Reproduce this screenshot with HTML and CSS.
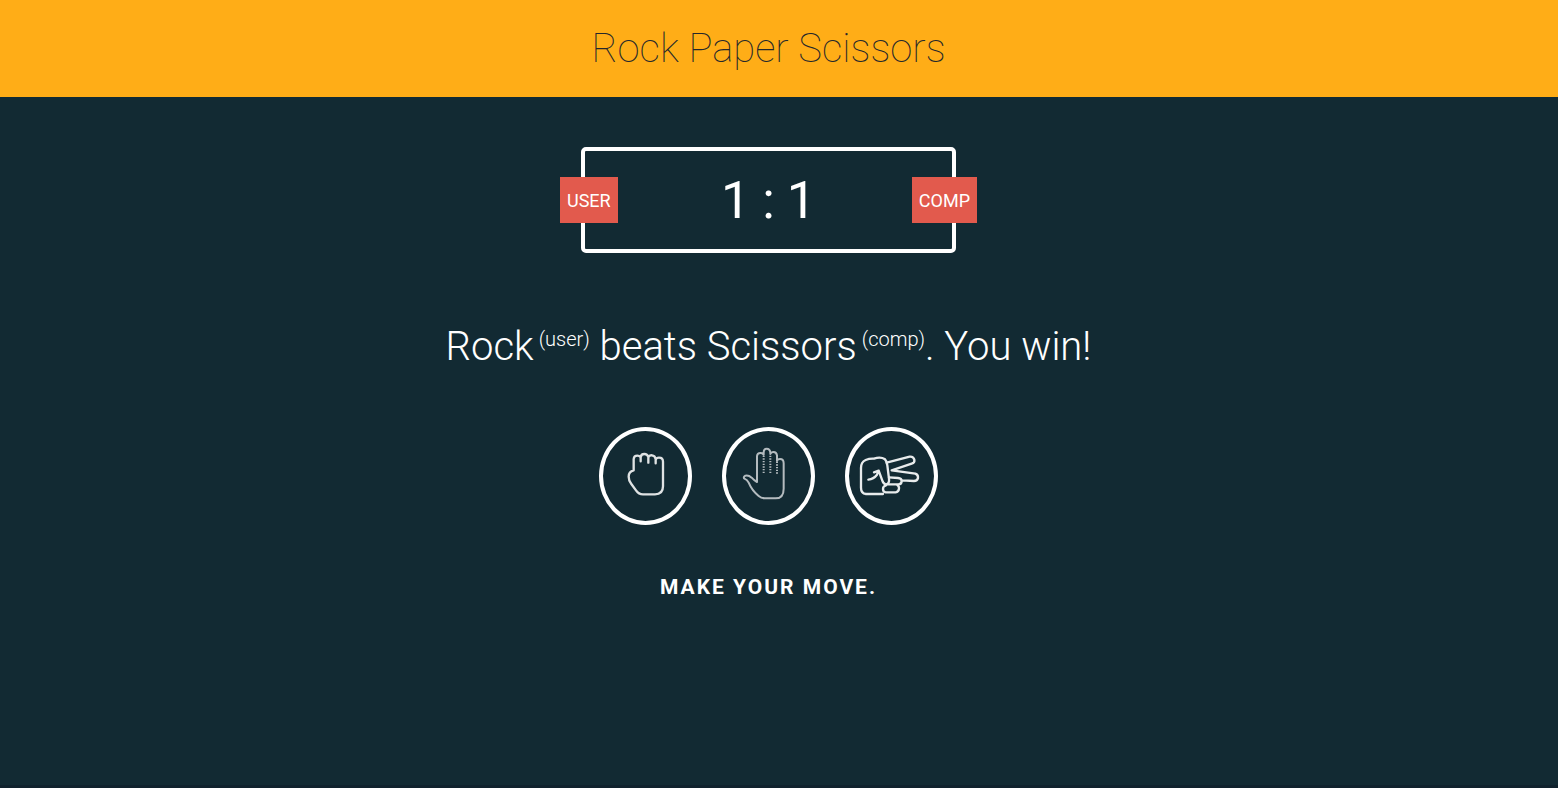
FILE: index.html
```html
<!DOCTYPE html>
<html lang="en">
<head>
<meta charset="utf-8">
<title>Rock Paper Scissors</title>
<link rel="stylesheet" href="styles.css">
</head>
<body>
<header class="header">
  <h1 class="title">Rock Paper Scissors</h1>
</header>
<main class="game">
  <section class="scoreboard" aria-label="Score">
    <span class="badge badge-user">user</span>
    <p class="score"><span>1</span>:<span>1</span></p>
    <span class="badge badge-comp">comp</span>
  </section>
  <p class="result">Rock<sup class="who">(user)</sup> beats Scissors<sup class="who">(comp)</sup>. You win!</p>
  <div class="choices">
    <button class="choice" type="button" aria-label="Rock">
      <svg class="hand" viewBox="39 33 255 270" aria-hidden="true">
        <path class="line" d="M131 151V117Q132 107 142 107Q148 107 152 112V124M152 112Q153 102 163 102Q172 102 175 111V128M175 112Q178 105 186 106Q195 107 197 117V130M197 119Q199 113 207 113Q219 113 219 125V199Q219 223 195 223H159Q146 223 138 211L124 192Q116 182 116 170Q116 154 131 151"/>
      </svg>
    </button>
    <button class="choice" type="button" aria-label="Paper">
      <svg class="hand" viewBox="33 33 255 270" aria-hidden="true">
        <path class="line line-thin" d="M126 186V108Q127 99 136 99Q143 99 146 104V98Q146 86 155 86Q165 86 166 98V102Q168 96 176 96Q184 96 186 106V123M186 122Q188 117 195 117Q206 117 206 130V206Q206 235 182 235H149Q139 235 131 228Q111 212 101 188Q97 179 87 175Q85 170 91 167Q101 165 110 173Q118 182 126 186"/>
        <path class="line line-thin dots" d="M146 107V163M166 107V163M186 125V163"/>
      </svg>
    </button>
    <button class="choice" type="button" aria-label="Scissors">
      <svg class="hand" viewBox="33 33 255 270" aria-hidden="true">
        <path class="line line-thick" d="M135 222H84Q69 220 69 203V144Q69 126 83 120Q95 115 108 116Q128 109 141 118Q147 124 148 136L153 176Q155 191 145 193Q137 194 133 182L122 152L108 157M122 152L117 164Q107 177 91 179"/>
        <path class="line line-thick" d="M146 128L215 110Q226 109 229 119Q231 128 221 131L161 151L232 161Q241 164 240 174Q238 183 228 183L193 181M153 172L180 174Q191 175 191 183Q191 193 181 193H147M177 194Q184 198 183 206Q182 216 173 217H143Q135 216 135 207Q135 198 144 196"/>
      </svg>
    </button>
  </div>
  <p class="action">Make your move.</p>
</main>
</body>
</html>
```
FILE: styles.css
```css
* {
  box-sizing: border-box;
  margin: 0;
  padding: 0;
}

body {
  min-height: 100vh;
  display: flex;
  flex-direction: column;
  background: #122a33;
  color: #fff;
  font-family: Roboto, "Liberation Sans", sans-serif;
  border-bottom: 3px solid #10222d;
}

.header {
  padding: 25px 21px 25px 0;
  background: #ffad17;
}

.title {
  color: #25272b;
  font-size: 40px;
  font-weight: 100;
  line-height: 47px;
  text-align: center;
}

.game {
  display: flex;
  flex-direction: column;
  align-items: center;
  padding: 50px 21px 50px 0;
}

.scoreboard {
  position: relative;
  width: 375px;
  padding: 20px;
  border: 4px solid #fff;
  border-radius: 5px;
}

.score {
  display: flex;
  justify-content: center;
  gap: 12px;
  padding-top: 2px;
  font-size: 52px;
  line-height: 56px;
}

.badge {
  position: absolute;
  top: 26px;
  padding: 13px 7px 11px;
  background: #e25a4d;
  font-size: 18px;
  line-height: 22px;
  text-transform: uppercase;
}

.badge-user {
  left: -25px;
}

.badge-comp {
  right: -25px;
}

.result {
  margin-top: 69px;
  font-size: 40px;
  font-weight: 300;
  line-height: 50px;
  text-align: center;
}

.who {
  margin-left: 5px;
  font-size: 20px;
  line-height: 1;
  vertical-align: 14px;
}

.choices {
  display: flex;
  gap: 30px;
  margin-top: 55px;
}

.choice {
  width: 93px;
  height: 98px;
  border: 4px solid #fff;
  border-radius: 50%;
  background: transparent;
  color: inherit;
  cursor: pointer;
}

.hand {
  display: block;
  width: 85px;
  height: 90px;
}

.line {
  fill: none;
  stroke: #dfe2e3;
  stroke-width: 7;
  stroke-linecap: round;
  stroke-linejoin: round;
}

.line-thin {
  stroke: #b4bbbf;
  stroke-width: 6;
}

.line-thick {
  stroke: #e8ebec;
}

.dots {
  stroke-dasharray: 4 4;
  stroke-linecap: butt;
}

.action {
  margin-top: 50px;
  font-size: 21px;
  font-weight: 700;
  letter-spacing: 2px;
  line-height: 24px;
  text-transform: uppercase;
}
```
